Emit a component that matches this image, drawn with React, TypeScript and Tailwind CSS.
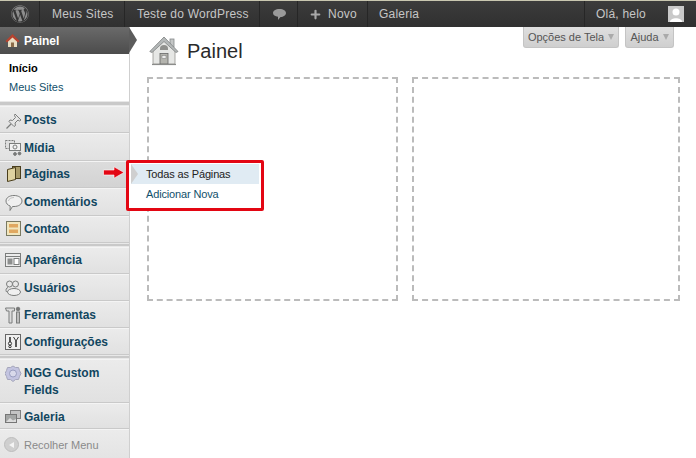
import React from "react";
import { FaWordpress } from "react-icons/fa";
import { Plus } from "lucide-react";

const font = { fontFamily: '"Liberation Sans", Arial, sans-serif' };

function HomeBig() {
  return (
    <svg width="30" height="30" viewBox="0 0 30 30">
      <rect x="21" y="3" width="4" height="8" fill="#c4c6c6" stroke="#85898a" strokeWidth="0.8" />
      <path d="M4 14 L15 3 L26 14 V28 H4 Z" fill="#e6e7e5" stroke="#94958f" strokeWidth="0.8" />
      <path d="M0.8 15.5 L15 1 L29 15.5 L27 16.5 L15 5.5 L3 16.5 Z" fill="#b4b8b8" stroke="#7d8080" strokeWidth="0.8" />
      <path d="M11 12.5 a4 3.5 0 0 1 8 0 v1.5 h-8 Z" fill="#8f908d" />
      <rect x="11" y="17.5" width="8" height="10.5" fill="#b4b4ae" stroke="#666" strokeWidth="0.8" />
      <rect x="13" y="19.5" width="4" height="3" fill="#ececec" stroke="#777" strokeWidth="0.5" />
      <path d="M3 28.5 H27" stroke="#8b8c8a" strokeWidth="1.2" />
    </svg>
  );
}

function HomeSmall() {
  return (
    <svg width="15" height="15" viewBox="0 0 15 15">
      <path d="M3 8 L7.5 3.5 L12 8 V14 H3 Z" fill="#e8dcc2" />
      <path d="M0.5 8 L7.5 1 L14.5 8 L13 9.5 L7.5 4.5 L2 9.5 Z" fill="#b5432f" />
      <rect x="6" y="9.5" width="3" height="4.5" fill="#8a6a48" />
    </svg>
  );
}

const stroke = { fill: "none", stroke: "#7b7d7c", strokeWidth: 1 };

const icons: Record<string, React.ReactNode> = {
  posts: (
    <svg width="18" height="18" viewBox="0 0 18 18" {...stroke}>
      <path d="M10 2 L16 8 L14.5 9 L13 8 L10 11 L10.5 13.5 L9 14.5 L4 9.5 L5 8 L7.5 8.5 L10.5 5.5 L9.5 3.5 Z" fill="#e6e6e6" />
      <path d="M6 12 L1.5 16.5" strokeWidth="1.2" />
    </svg>
  ),
  media: (
    <svg width="18" height="18" viewBox="0 0 18 18" {...stroke}>
      <rect x="0.5" y="1.5" width="9" height="8" fill="#dedede" strokeDasharray="2 1" />
      <rect x="4.5" y="4.5" width="11" height="7" fill="#f2f2f2" />
      <circle cx="10" cy="8" r="2" />
      <circle cx="10" cy="15" r="1.4" fill="#777" />
      <circle cx="14.5" cy="14.5" r="1.4" fill="#777" />
    </svg>
  ),
  pages: (
    <svg width="18" height="18" viewBox="0 0 18 18">
      <rect x="7.5" y="1.5" width="8" height="12" fill="#a89a68" stroke="#4a3e1c" />
      <path d="M2.5 4.5 L10.5 2.5 V14.5 L2.5 16.5 Z" fill="#dfd2a0" stroke="#4a3e1c" />
    </svg>
  ),
  comments: (
    <svg width="18" height="18" viewBox="0 0 18 18" {...stroke}>
      <path d="M9 1.5 C13.8 1.5 17 3.9 17 7 C17 10.1 13.8 12.5 9 12.5 L7.5 12.5 L5 16.5 L5.2 12 C2.6 11.2 1 9.3 1 7 C1 3.9 4.2 1.5 9 1.5 Z" fill="#f0f0f0" />
      <path d="M3.5 7 C3.5 5 6 3.5 9 3.5" stroke="#c4c4c4" />
    </svg>
  ),
  contact: (
    <svg width="18" height="18" viewBox="0 0 18 18">
      <rect x="1.5" y="1.5" width="14" height="14" fill="#f1e6bd" stroke="#7a7a62" />
      <rect x="4" y="4" width="9" height="3.5" fill="#e0a860" />
      <rect x="4" y="9.5" width="9" height="3.5" fill="#e0a860" />
    </svg>
  ),
  appearance: (
    <svg width="18" height="18" viewBox="0 0 18 18" {...stroke}>
      <rect x="0.5" y="2.5" width="15" height="13" fill="#ececec" />
      <path d="M0.5 5.5 H15.5" />
      <rect x="2.5" y="7.5" width="5" height="6" fill="#8d8f8e" stroke="none" />
      <rect x="9" y="7.5" width="5" height="6" fill="#fff" />
    </svg>
  ),
  users: (
    <svg width="18" height="18" viewBox="0 0 18 18" {...stroke}>
      <circle cx="4.5" cy="5" r="3" fill="#e8e8e8" />
      <circle cx="10.5" cy="5" r="3" fill="#e8e8e8" />
      <ellipse cx="9" cy="13" rx="6.5" ry="3.5" fill="#f0f0f0" />
      <path d="M1.5 13 C0.5 11 1 9 3 8.5" />
    </svg>
  ),
  tools: (
    <svg width="18" height="18" viewBox="0 0 18 18" {...stroke}>
      <path d="M0.5 2 H9.5 L9.5 5 H7 V17 H4 V5 H1.5 Z" fill="#dcdcdc" />
      <circle cx="13" cy="3" r="1.8" fill="#777" />
      <rect x="11.5" y="6" width="3" height="11" fill="#bdbdbd" />
    </svg>
  ),
  settings: (
    <svg width="18" height="18" viewBox="0 0 18 18" {...stroke}>
      <rect x="0.5" y="1.5" width="15" height="15" fill="#efefef" stroke="#666" />
      <circle cx="5" cy="10.5" r="1.6" stroke="#333" />
      <circle cx="5" cy="13.5" r="1.2" stroke="#333" />
      <path d="M5 4 V9" stroke="#333" strokeWidth="1.6" />
      <path d="M11 8 V14" stroke="#333" strokeWidth="1.6" />
      <path d="M8.5 4 L11 8 L13.5 4" stroke="#333" />
    </svg>
  ),
  ngg: (
    <svg width="18" height="18" viewBox="0 0 18 18">
      <path d="M8 1 L10.5 2.5 L13.5 2.5 L14.5 5.5 L16 8.5 L14.5 11.5 L13.5 14.5 L10.5 14.5 L8 16.5 L5.5 14.5 L2.5 14.5 L1.5 11.5 L0 8.5 L1.5 5.5 L2.5 2.5 L5.5 2.5 Z" fill="#c3c4e0" stroke="#a5a6bb" />
      <circle cx="8" cy="8.5" r="3.5" fill="#d8d9ea" stroke="#9a9dc0" />
    </svg>
  ),
  gallery: (
    <svg width="18" height="18" viewBox="0 0 18 18">
      <rect x="5.5" y="2.5" width="10" height="8" fill="#c4c4c4" stroke="#808080" />
      <rect x="0.5" y="6.5" width="11" height="8" fill="#a4a6a5" stroke="#767676" />
      <path d="M1 14 L5 10 L8 12.5 L11 11 V14 Z" fill="#dcdcdc" />
    </svg>
  ),
};

function Row({ icon, children, hi, className }: { icon: string; children: React.ReactNode; hi?: boolean; className: string }) {
  return (
    <div
      className={`flex shrink-0 pl-[5px] border-t border-t-[#f4f4f4] border-b border-b-[#c9c9c9] text-[12px] font-bold text-[#11465f] leading-[17px] ${className} ${
        hi ? "bg-gradient-to-b from-[#dcdcdc] to-[#d3d3d3]" : "bg-gradient-to-b from-[#ebebeb] to-[#e1e1e1]"
      }`}
    >
      <span className="w-[18px] h-[18px] shrink-0">{icons[icon]}</span>
      <span className="ml-[1px] w-[90px]">{children}</span>
    </div>
  );
}

function TopItem({ children, className = "" }: { children: React.ReactNode; className?: string }) {
  return (
    <div className={`h-full flex items-center border-r border-r-[#262626] text-[12px] tracking-[0.22px] text-[#c6c6c6] ${className}`}>
      {children}
    </div>
  );
}

export default function App() {
  return (
    <div style={font} className="relative w-[696px] h-[458px] overflow-hidden bg-white flex flex-col">
      <header className="h-[27px] shrink-0 flex bg-gradient-to-b from-[#3c3c3c] to-[#303030] border-t border-t-[#c9c7b0]">
        <TopItem className="w-[40px] justify-center">
          <FaWordpress size={18} color="#8d8d8d" />
        </TopItem>
        <TopItem className="w-[85px] pl-[12px]">Meus Sites</TopItem>
        <TopItem className="w-[135px] pl-[12px]">Teste do WordPress</TopItem>
        <TopItem className="w-[38px] pl-[13px]">
          <svg width="13" height="11" viewBox="0 0 13 11">
            <path d="M6.5 0 C10.5 0 13 1.8 13 4 C13 6.2 10.5 8 7.5 8 L5 11 L5 7.8 C2.2 7.4 0 6 0 4 C0 1.8 2.5 0 6.5 0 Z" fill="#9a9a9a" />
          </svg>
        </TopItem>
        <TopItem className="w-[70px] pl-[11px] gap-[6px]">
          <Plus size={13} strokeWidth={4} color="#a9a9a9" />
          Novo
        </TopItem>
        <TopItem className="flex-1 pl-[11px] border-r-0">Galeria</TopItem>
        <div className="h-full flex items-center border-l border-l-[#262626] pl-[11px] pr-[12px] text-[12px] tracking-[0.22px] text-[#c6c6c6]">
          <span>Olá, helo</span>
          <span className="ml-[22px] w-[16px] h-[16px] bg-[#c9c9c9] flex items-end justify-center overflow-hidden">
            <svg width="16" height="16" viewBox="0 0 16 16">
              <circle cx="8" cy="6" r="3.5" fill="#fff" />
              <path d="M2 16 C2 11 14 11 14 16 Z" fill="#fff" />
            </svg>
          </span>
        </div>
      </header>

      <div className="flex-1 flex min-h-0">
        <aside className="w-[130px] shrink-0 bg-[#e4e4e4] border-r border-r-[#cfcfcf] flex flex-col">
          <div className="relative h-[27px] shrink-0 flex items-center pl-[5px] gap-[3px] bg-gradient-to-b from-[#6a6a6a] to-[#4c4c4c] text-white text-[12px] font-bold">
            <HomeSmall />
            <span className="ml-[1px]">Painel</span>
            <span className="absolute left-[129px] top-0 w-0 h-0 border-y-[13.5px] border-y-transparent border-l-[8px] border-l-[#5c5c5c]" />
          </div>
          <div className="h-[47px] shrink-0 bg-white pl-[9px] pt-[5px] text-[11px] leading-[19px]">
            <div className="font-bold text-black">Início</div>
            <div className="text-[#11506b]">Meus Sites</div>
          </div>
          <div className="h-[5px] shrink-0 bg-[#c9c9c9] border-y border-y-[#e8e8e8]" />
          <Row icon="posts" className="h-[27.4px] items-center pt-[2px]">Posts</Row>
          <Row icon="media" className="h-[27.4px] items-center pt-[2px]">Mídia</Row>
          <Row icon="pages" hi className="h-[27.4px] items-center">Páginas</Row>
          <Row icon="comments" className="h-[27.4px] items-center pt-[2px]">Comentários</Row>
          <Row icon="contact" className="h-[27.4px] items-center">Contato</Row>
          <div className="h-[4px] shrink-0 bg-[#c9c9c9] border-y border-y-[#e8e8e8]" />
          <Row icon="appearance" className="h-[27px] items-center">Aparência</Row>
          <Row icon="users" className="h-[27px] items-center pt-[2px]">Usuários</Row>
          <Row icon="tools" className="h-[27px] items-center pt-[2px]">Ferramentas</Row>
          <Row icon="settings" className="h-[27px] items-center pt-[2px]">Configurações</Row>
          <div className="h-[4px] shrink-0 bg-[#c9c9c9] border-y border-y-[#e8e8e8]" />
          <Row icon="ngg" className="h-[44px] items-start pt-[5px]">NGG Custom Fields</Row>
          <Row icon="gallery" className="h-[26px] items-center pt-[3px]">Galeria</Row>
          <div className="flex-1 flex items-center pl-[4px] pt-[2px] gap-[5px] text-[11px] text-[#8a8a8a] bg-gradient-to-b from-[#ebebeb] to-[#e4e4e4] border-t border-t-[#f4f4f4]">
            <span className="w-[15px] h-[15px] rounded-full bg-[#cfcfcf] border border-[#bdbdbd] flex items-center justify-center">
              <span className="w-0 h-0 border-y-[3px] border-y-transparent border-r-[5px] border-r-[#f4f4f4]" />
            </span>
            Recolher Menu
          </div>
        </aside>

        <main className="relative flex-1 min-w-0 flex flex-col pt-[9px] pl-[19px]">
          <div className="absolute right-[22px] top-0 flex gap-[6px] text-[11px] text-[#555]">
            <div className="h-[21px] w-[96px] flex items-center justify-center gap-[4px] rounded-b-[3px] bg-gradient-to-b from-[#dfdfdf] to-[#cfcfcf] border-x border-b border-[#c4c4c4]">
              Opções de Tela
              <span className="w-0 h-0 border-x-[3.5px] border-x-transparent border-t-[6px] border-t-[#aaa]" />
            </div>
            <div className="h-[21px] w-[49px] flex items-center justify-center gap-[4px] rounded-b-[3px] bg-gradient-to-b from-[#dfdfdf] to-[#cfcfcf] border-x border-b border-[#c4c4c4]">
              Ajuda
              <span className="w-0 h-0 border-x-[3.5px] border-x-transparent border-t-[6px] border-t-[#aaa]" />
            </div>
          </div>
          <div className="h-[30px] shrink-0 flex items-center gap-[8px]">
            <HomeBig />
            <h1 className="text-[20px] text-[#2a2a2a] leading-[30px]">Painel</h1>
          </div>
          <div className="flex gap-[14px] mt-[11px] -ml-[2px]">
            <div className="w-[251px] h-[224px] border-2 border-dashed border-[#bbb]" />
            <div className="w-[268px] h-[224px] border-2 border-dashed border-[#bbb]" />
          </div>
        </main>
      </div>

      <div className="absolute left-[126px] top-[160px] w-[138px] h-[51px] bg-white border-[3px] border-[#e30613] rounded-[2px] pt-[1px] px-[2px] text-[11px] tracking-[-0.15px] leading-[20px] text-[#11506b]">
        <div className="relative h-[20px] bg-[#e0ebf3] pl-[15px] text-[#222]">
          <span className="absolute left-0 top-0 w-0 h-0 border-y-[10px] border-y-transparent border-l-[7px] border-l-[#cfcfcf]" />
          Todas as Páginas
        </div>
        <div className="pl-[15px]">Adicionar Nova</div>
      </div>
      <svg className="absolute left-[103px] top-[166px]" width="22" height="13" viewBox="0 0 22 13">
        <path d="M0.5 4 H11 V0.8 L21 6.5 L11 12.2 V9 H0.5 Z" fill="#e30613" stroke="#fff" strokeWidth="0.6" />
      </svg>
    </div>
  );
}
